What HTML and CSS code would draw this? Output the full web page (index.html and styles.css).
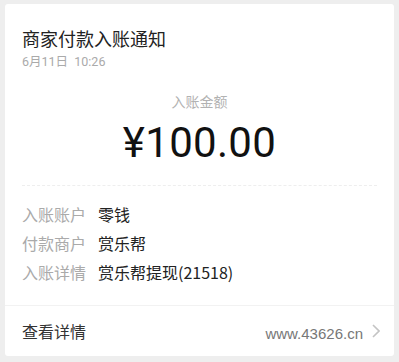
FILE: index.html
```html
<!DOCTYPE html>
<html lang="zh">
<head>
<meta charset="utf-8">
<link rel="stylesheet" href="styles.css">
</head>
<body>
<div class="card">
  <div class="head">
    <div class="title">商家付款入账通知</div>
    <div class="date">6月11日&nbsp;&nbsp;10:26</div>
  </div>
  <div class="amount-block">
    <div class="amount-label">入账金额</div>
    <div class="amount">¥100.00</div>
  </div>
  <div class="rows">
    <div class="row"><span class="k">入账账户</span><span class="v">零钱</span></div>
    <div class="row"><span class="k">付款商户</span><span class="v">赏乐帮</span></div>
    <div class="row"><span class="k">入账详情</span><span class="v">赏乐帮提现(21518)</span></div>
  </div>
  <div class="foot">
    <span class="more">查看详情</span>
    <span class="site">www.43626.cn</span>
    <svg class="chev" width="8" height="14" viewBox="0 0 8 14"><path d="M1 1l6 6-6 6" fill="none" stroke="#c4c4c4" stroke-width="1.6"/></svg>
  </div>
</div>
</body>
</html>
```
FILE: styles.css
```css
html, body { margin: 0; padding: 0; }
body {
  width: 399px; height: 362px; overflow: hidden;
  background: #eeeeee;
  font-family: "Noto Sans CJK SC", Roboto, sans-serif;
  padding: 4px 5px 0 5px; box-sizing: border-box;
}
.card {
  background: #fff;
  width: 389px; height: 352px;
  border-radius: 3px;
  display: flex; flex-direction: column;
  box-sizing: border-box;
}
.head { padding: 22px 17px 0; }
.title { font-size: 18px; line-height: 25px; color: #222; }
.date { font-size: 12.5px; line-height: 16px; color: #aaa; margin-top: 3px; font-family: Roboto, "Noto Sans CJK SC", sans-serif; }
.amount-block { text-align: center; margin: 21px 17px 0; padding-bottom: 18px; border-bottom: 1px dashed #eee; }
.amount-label { font-size: 14px; line-height: 20px; color: #b2b2b2; }
.amount { font-family: Roboto, sans-serif; font-size: 42px; line-height: 48px; color: #111; margin-top: 8px; letter-spacing: 0.3px; }
.rows { padding: 14px 17px 0; flex: 1; border-bottom: 1px solid #f2f2f2; }
.row { font-size: 16px; line-height: 29px; }
.k { color: #aaa; margin-right: 12px; }
.v { color: #222; }
.foot { display: flex; align-items: center; height: 50px; padding: 0 17px; }
.more { font-size: 16px; color: #333; flex: 1; }
.site { font-family: "Liberation Sans", sans-serif; font-size: 15px; color: #777; margin-right: 9px; margin-top: 5px; }
.chev { margin-right: -3px; }
```
